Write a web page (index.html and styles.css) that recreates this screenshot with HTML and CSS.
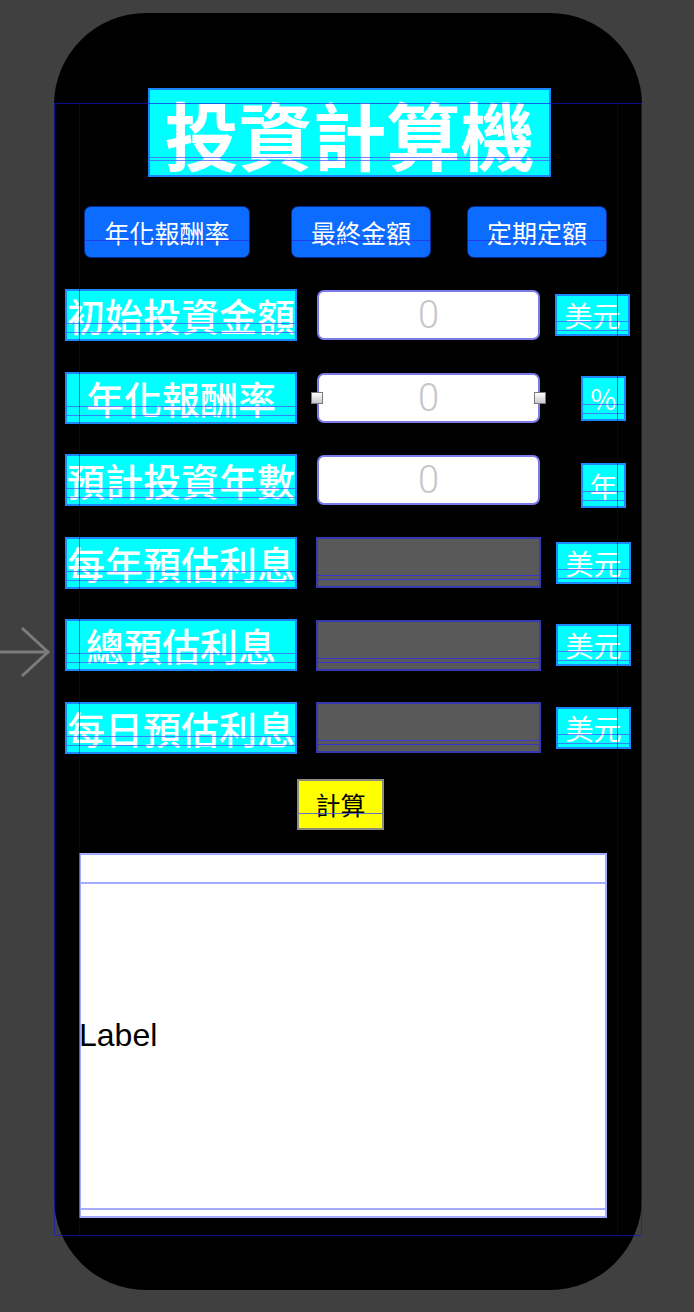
FILE: index.html
```html
<!DOCTYPE html>
<html lang="zh-Hant">
<head>
<meta charset="utf-8">
<title>投資計算機</title>
<link rel="stylesheet" href="styles.css">
</head>
<body>
<div class="canvas">
  <div class="entry">
    <svg width="54" height="54" viewBox="0 0 54 54" aria-hidden="true">
      <line x1="0" y1="26" x2="49" y2="26" stroke="#7c7c7c" stroke-width="3"/>
      <polyline points="22,2 48,26 22,50" fill="none" stroke="#7c7c7c" stroke-width="3"/>
    </svg>
  </div>
  <div class="phone">
    <div class="title">投資計算機</div>
    <div class="tabs">
      <div class="tab tab-wide">年化報酬率</div>
      <div class="tab tab-mid">最終金額</div>
      <div class="tab">定期定額</div>
    </div>
    <div class="form">
      <div class="row">
        <div class="lbl">初始投資金額</div>
        <div class="field"><span class="ph">0</span></div>
        <div class="unit">美元</div>
      </div>
      <div class="row">
        <div class="lbl">年化報酬率</div>
        <div class="field"><span class="handle handle-l"></span><span class="ph">0</span><span class="handle handle-r"></span></div>
        <div class="unit unit-narrow">%</div>
      </div>
      <div class="row">
        <div class="lbl">預計投資年數</div>
        <div class="field"><span class="ph">0</span></div>
        <div class="unit unit-narrow unit-low">年</div>
      </div>
      <div class="row">
        <div class="lbl">每年預估利息</div>
        <div class="out"></div>
        <div class="unit">美元</div>
      </div>
      <div class="row">
        <div class="lbl">總預估利息</div>
        <div class="out"></div>
        <div class="unit">美元</div>
      </div>
      <div class="row">
        <div class="lbl">每日預估利息</div>
        <div class="out"></div>
        <div class="unit">美元</div>
      </div>
    </div>
    <div class="calc">計算</div>
    <div class="result"><span class="result-text">Label</span></div>
    <div class="safe"></div>
  </div>
</div>
</body>
</html>
```

FILE: styles.css
```css
html, body {
  margin: 0;
  padding: 0;
}
body {
  background: #404040;
  width: 694px;
  height: 1312px;
  overflow: hidden;
  font-family: "Noto Sans CJK TC", "Noto Sans CJK SC", sans-serif;
}
.canvas {
  display: flex;
  align-items: flex-start;
}
.entry {
  width: 54px;
  flex: none;
  padding-top: 626px;
  line-height: 0;
}
.phone {
  position: relative;
  flex: none;
  width: 588px;
  height: 1277px;
  margin-top: 13px;
  background: #000;
  border-radius: 92px;
  display: flex;
  flex-direction: column;
  align-items: flex-start;
  padding-top: 75px;
  box-sizing: border-box;
}

/* guide lines overlay */
.title::after, .tab::after, .lbl::after, .unit::after, .out::after, .calc::after {
  content: "";
  position: absolute;
  left: 0;
  right: 0;
  box-sizing: border-box;
  pointer-events: none;
}

.title {
  margin-left: 94px;
  width: 403px;
  height: 89px;
  box-sizing: border-box;
  background: #00ffff;
  border: 2px solid #1c86ff;
  display: flex;
  align-items: center;
  justify-content: center;
  position: relative;
  color: #fff;
  font-size: 74px;
  font-weight: 700;
  line-height: 1;
  white-space: nowrap;
}
.title::after {
  top: 67px;
  height: 4px;
  border-top: 1px solid rgba(70, 90, 255, 0.75);
  border-bottom: 1px solid rgba(70, 90, 255, 0.75);
}

.tabs {
  margin-top: 29px;
  margin-left: 30px;
  display: flex;
}
.tab {
  position: relative;
  width: 140px;
  height: 52px;
  box-sizing: border-box;
  background: #0b6cff;
  border: 1px solid #0a2a9a;
  border-radius: 7px;
  color: #fff;
  font-size: 25px;
  line-height: 1;
  display: flex;
  align-items: center;
  justify-content: center;
  white-space: nowrap;
}
.tab::after {
  top: 33px;
  height: 1px;
  background: rgba(40, 50, 230, 0.8);
}
.tab-wide {
  width: 166px;
  margin-right: 41px;
}
.tab-mid {
  margin-right: 36px;
}

.form {
  margin-top: 31px;
  margin-left: 11px;
  display: flex;
  flex-direction: column;
  gap: 30.6px;
}
.row {
  display: flex;
  align-items: center;
  height: 52px;
}
.lbl {
  position: relative;
  flex: none;
  width: 232px;
  height: 52px;
  box-sizing: border-box;
  background: #00ffff;
  border: 2px solid #1e88ff;
  color: #fff;
  font-size: 38px;
  font-weight: 500;
  line-height: 1;
  display: flex;
  align-items: center;
  justify-content: center;
  white-space: nowrap;
}
.lbl::after {
  top: 32px;
  height: 10px;
  border-top: 1px solid rgba(70, 90, 255, 0.75);
  border-bottom: 1px solid rgba(70, 90, 255, 0.75);
}
.field {
  position: relative;
  flex: none;
  margin-left: 20px;
  width: 223px;
  height: 50px;
  box-sizing: border-box;
  background: #fff;
  border: 2px solid #7b7be8;
  border-radius: 7px;
  display: flex;
  align-items: center;
  justify-content: center;
}
.ph {
  color: #c6c6cc;
  font-family: Roboto, "Liberation Sans", sans-serif;
  font-weight: 300;
  font-size: 38px;
  line-height: 1;
}
.handle {
  position: absolute;
  top: 50%;
  width: 12px;
  height: 12px;
  margin-top: -6px;
  box-sizing: border-box;
  border: 1.5px solid #7a7a7a;
  background: linear-gradient(#ffffff, #c8c8d0);
}
.handle-l { left: -8px; }
.handle-r { right: -8px; }

.out {
  position: relative;
  flex: none;
  margin-left: 19px;
  width: 225px;
  height: 51px;
  box-sizing: border-box;
  background: #595959;
  border: 2px solid #3838b0;
}
.out::after {
  top: 36px;
  height: 5px;
  border-top: 1px solid rgba(50, 50, 220, 0.9);
  border-bottom: 1px solid rgba(50, 50, 220, 0.9);
}

.unit {
  position: relative;
  flex: none;
  align-self: flex-start;
  margin-top: 5px;
  margin-left: 15px;
  width: 75px;
  height: 42px;
  box-sizing: border-box;
  background: #00ffff;
  border: 2px solid #1e88ff;
  color: #fff;
  font-size: 28px;
  line-height: 1;
  display: flex;
  align-items: center;
  justify-content: center;
  white-space: nowrap;
}
.unit::after {
  top: 25px;
  height: 10px;
  border-top: 1px solid rgba(70, 90, 255, 0.75);
  border-bottom: 1px solid rgba(70, 90, 255, 0.75);
}
.unit-narrow {
  margin-left: 41px;
  margin-top: 4px;
  width: 45px;
  height: 45px;
}
.unit-narrow::after {
  top: 26px;
}
.unit-low {
  margin-top: 9px;
}

.calc {
  position: relative;
  margin-top: 25px;
  margin-left: 243px;
  width: 87px;
  height: 51px;
  box-sizing: border-box;
  background: #ffff00;
  border: 2px solid #8c8c7c;
  color: #000;
  font-size: 25px;
  line-height: 1;
  display: flex;
  align-items: center;
  justify-content: center;
}
.calc::after {
  top: 32px;
  height: 1px;
  background: rgba(60, 80, 230, 0.8);
}

.result {
  position: relative;
  margin-top: 23px;
  margin-left: 25px;
  width: 528px;
  height: 365px;
  box-sizing: border-box;
  background: #fff;
  border: 2px solid #a4aaff;
  display: flex;
  align-items: center;
  font-family: "Liberation Sans", Arial, sans-serif;
  font-size: 32px;
  color: #000;
}
.result-text {
  margin-left: -2px;
}
.result::before, .result::after {
  content: "";
  position: absolute;
  left: 0;
  right: 0;
  height: 2px;
  background: #a4aaff;
}
.result::before { top: 27px; }
.result::after { bottom: 6px; }

.safe {
  position: absolute;
  left: 0;
  top: 90px;
  width: 588px;
  height: 1133px;
  box-sizing: border-box;
  border: 1px solid rgba(20, 20, 220, 0.65);
  pointer-events: none;
}
.safe::before {
  content: "";
  position: absolute;
  top: 0;
  bottom: 0;
  left: 24px;
  width: 539px;
  box-sizing: border-box;
  border-left: 1px solid rgba(0, 0, 170, 0.5);
  border-right: 1px solid rgba(0, 0, 170, 0.5);
}
```
